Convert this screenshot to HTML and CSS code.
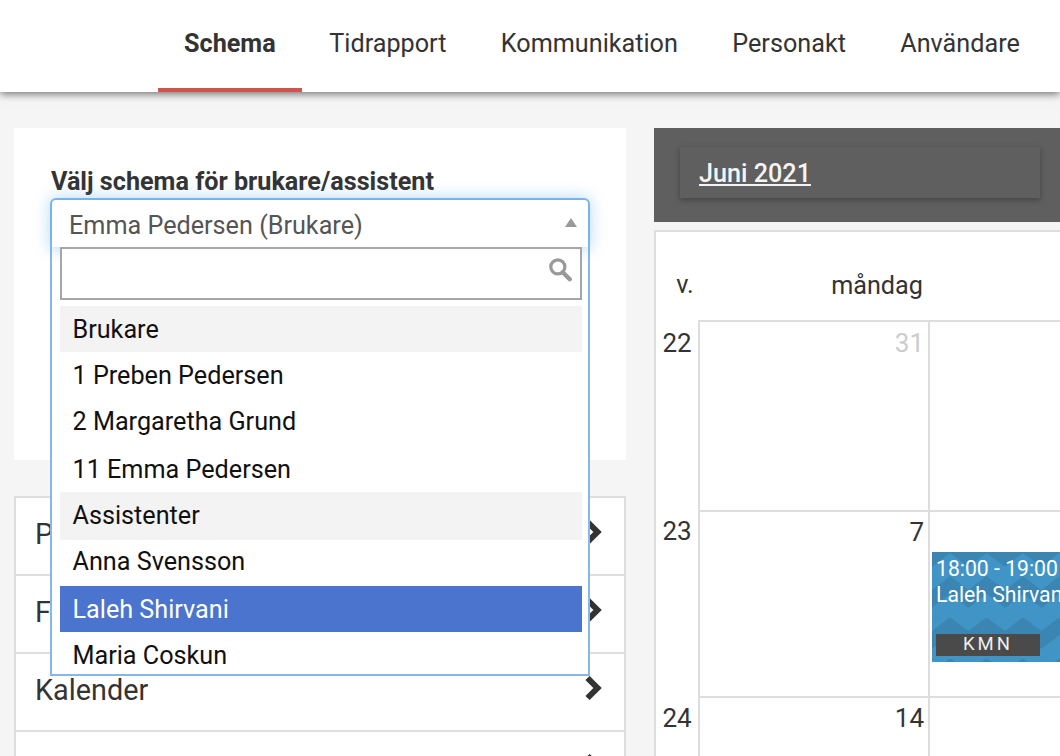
FILE: index.html
```html
<!DOCTYPE html>
<html lang="sv">

<head>
  <meta charset="UTF-8">
  <title>Schema</title>
  <link rel="stylesheet" href="styles.css">
</head>

<body>

  <header class="header">
    <nav class="tabs">
      <a class="tabs__item tabs__item--active" href="#">Schema</a>
      <a class="tabs__item" href="#">Tidrapport</a>
      <a class="tabs__item" href="#">Kommunikation</a>
      <a class="tabs__item" href="#">Personakt</a>
      <a class="tabs__item" href="#">Användare</a>
    </nav>
  </header>

  <main class="page">
    <aside class="side">
      <section class="picker">
        <label class="picker__label">Välj schema för brukare/assistent</label>
        <div class="select">
          <div class="select__current">
            Emma Pedersen (Brukare)
            <span class="select__arrow"></span>
          </div>
          <div class="select__search">
            <svg class="select__icon" viewBox="0 0 24 24" width="26" height="26">
              <circle cx="10" cy="10" r="6.5" fill="none" stroke="#999" stroke-width="3" />
              <path d="M14.5 15l6.5 6.5" stroke="#999" stroke-width="4" stroke-linecap="round" />
            </svg>
          </div>
          <ul class="select__list">
            <li class="select__group">Brukare</li>
            <li class="select__option">1 Preben Pedersen</li>
            <li class="select__option">2 Margaretha Grund</li>
            <li class="select__option select__option--tall">11 Emma Pedersen</li>
            <li class="select__group select__group--tall">Assistenter</li>
            <li class="select__option select__option--high">Anna Svensson</li>
            <li class="select__option select__option--active">Laleh Shirvani</li>
            <li class="select__option select__option--last">Maria Coskun</li>
          </ul>
        </div>
      </section>

      <ul class="menu">
        <li class="menu__row">P
          <svg class="menu__chevron" viewBox="0 0 20 26" width="20" height="26"><path d="M3.5 3l10 10-10 10" /></svg>
        </li>
        <li class="menu__row">F
          <svg class="menu__chevron" viewBox="0 0 20 26" width="20" height="26"><path d="M3.5 3l10 10-10 10" /></svg>
        </li>
        <li class="menu__row">Kalender
          <svg class="menu__chevron" viewBox="0 0 20 26" width="20" height="26"><path d="M3.5 3l10 10-10 10" /></svg>
        </li>
        <li class="menu__row">&nbsp;
          <svg class="menu__chevron" viewBox="0 0 20 26" width="20" height="26"><path d="M3.5 3l10 10-10 10" /></svg>
        </li>
      </ul>
    </aside>

    <section class="cal">
      <div class="cal__bar">
        <div class="cal__month"><a href="#">Juni 2021</a></div>
      </div>
      <div class="cal__body">
        <div class="cal__head">
          <div class="cal__week-title">v.</div>
          <div class="cal__day-title">måndag</div>
        </div>
        <div class="cal__row cal__row--first">
          <div class="cal__week">22</div>
          <div class="cal__cell"><span class="cal__date cal__date--muted">31</span></div>
          <div class="cal__cell"></div>
        </div>
        <div class="cal__row cal__row--second">
          <div class="cal__week">23</div>
          <div class="cal__cell"><span class="cal__date">7</span></div>
          <div class="cal__cell">
            <div class="event">
              <svg class="event__bg" width="100%" height="100%">
                <defs>
                  <pattern id="zigzag" width="36.5" height="41" patternUnits="userSpaceOnUse" patternTransform="translate(0 24)">
                    <path d="M0 14L18 0 36.5 14V32L18 18 0 32Z" fill="#3a85b2" />
                  </pattern>
                </defs>
                <rect width="100%" height="100%" fill="url(#zigzag)" />
              </svg>
              <div class="event__time">18:00 - 19:00</div>
              <div class="event__name">Laleh Shirvani</div>
              <div class="event__tag">KMN</div>
            </div>
          </div>
        </div>
        <div class="cal__row cal__row--third">
          <div class="cal__week">24</div>
          <div class="cal__cell"><span class="cal__date">14</span></div>
          <div class="cal__cell"></div>
        </div>
      </div>
    </section>
  </main>

</body>

</html>
```

FILE: styles.css
```css
* {
  box-sizing: border-box;
  margin: 0;
  padding: 0;
}

html,
body {
  height: 100%;
  overflow: hidden;
}

body {
  background: #f5f5f5;
  color: #333;
  font-family: Roboto, "Liberation Sans", sans-serif;
  font-size: 25.2px;
}

ul {
  list-style: none;
}

a {
  color: inherit;
  text-decoration: none;
}

.header {
  background: #fff;
  box-shadow: 0 2px 8px rgba(0, 0, 0, .55);
  height: 92px;
  position: relative;
  z-index: 2;
}

.tabs {
  display: flex;
  height: 100%;
  padding-left: 158px;
}

.tabs__item {
  border-bottom: 4px solid transparent;
  line-height: 87px;
  padding: 0 27.2px;
  white-space: nowrap;
}

.tabs__item--active {
  border-bottom-color: #d2544f;
  font-weight: 700;
  padding: 0 26.5px 0 26px;
}

.page {
  display: flex;
  gap: 28px;
  height: 664px;
  overflow: hidden;
  padding: 36px 0 0 14px;
}

.side {
  flex: none;
  width: 612px;
}

.picker {
  background: #fff;
  height: 332px;
  padding: 38px 37px 0;
  position: relative;
}

.picker__label {
  display: block;
  font-weight: 700;
  line-height: 32px;
}

.select {
  background: #fff;
  border: 2px solid #86b7e8;
  border-radius: 6px 6px 0 0;
  height: 478px;
  left: 36px;
  position: absolute;
  top: 70px;
  width: 540px;
  z-index: 3;
}

.select__current {
  border-radius: 4px 4px 0 0;
  box-shadow: 0 0 16px 2px rgba(82, 168, 236, .45);
  color: #555;
  height: 47px;
  line-height: 52px;
  padding-left: 17px;
  position: relative;
}

.select__arrow {
  border-bottom: 9px solid #999;
  border-left: 6px solid transparent;
  border-right: 6px solid transparent;
  position: absolute;
  right: 11px;
  top: 18px;
}

.select__search {
  background: #fff;
  border: 2px solid #a6a6a6;
  height: 53px;
  margin: 0 6px 0 8px;
  position: relative;
}

.select__icon {
  position: absolute;
  right: 7px;
  top: 7px;
}

.select__list {
  background: #fff;
  color: #111;
  margin: 0 6px 0 8px;
  padding-top: 6px;
  position: relative;
}

.select__option,
.select__group {
  height: 46px;
  line-height: 48px;
  padding-left: 12.5px;
  white-space: nowrap;
}

.select__option--tall {
  height: 48px;
  line-height: 52px;
}

.select__option--high {
  line-height: 44px;
}

.select__option--last {
  height: 42px;
  line-height: 39px;
  padding-top: 4px;
}

.select__group {
  background: #f3f3f3;
}

.select__group--tall {
  height: 48px;
}

.select__option--active {
  background: #4a74ce;
  color: #fff;
}

.menu {
  background: #fff;
  border: 2px solid #ddd;
  border-bottom: 0;
  font-size: 28.8px;
  margin-top: 36px;
}

.menu__row {
  align-items: center;
  border-bottom: 2px solid #ddd;
  display: flex;
  height: 78px;
  justify-content: space-between;
  padding: 0 20px 4px 19px;
}

.menu__chevron {
  fill: none;
  margin-top: -4px;
  stroke: #333;
  stroke-width: 6;
}

.cal {
  flex: 1;
  min-width: 0;
}

.cal__bar {
  background: #5f5f5f;
  height: 94px;
  padding: 19px 0 0 26px;
}

.cal__month {
  background: #5f5f5f;
  box-shadow: 0 2px 6px rgba(0, 0, 0, .3);
  color: #f4f4f4;
  font-weight: 500;
  height: 51px;
  line-height: 53px;
  padding-left: 19px;
  width: 360px;
}

.cal__month a {
  text-decoration: underline;
}

.cal__body {
  background: #fff;
  border-left: 2px solid #ddd;
  border-top: 2px solid #ddd;
  height: 526px;
  margin-top: 8px;
  overflow: hidden;
}

.cal__head {
  display: flex;
  height: 88px;
}

.cal__week-title {
  line-height: 106px;
  padding-left: 16px;
  text-align: center;
  width: 42px;
}

.cal__day-title {
  flex: none;
  line-height: 108px;
  text-align: center;
  width: 358px;
}

.cal__row {
  display: flex;
}

.cal__row--first {
  height: 190px;
}

.cal__row--second {
  height: 186px;
}

.cal__row--third {
  height: 100px;
}

.cal__week {
  flex: none;
  font-size: 26px;
  line-height: 43px;
  text-align: center;
  width: 42px;
}

.cal__row--first .cal__week {
  line-height: 47px;
}

.cal__row--third .cal__week {
  line-height: 44px;
}

.cal__cell {
  border-left: 2px solid #ddd;
  border-top: 2px solid #ddd;
  flex: none;
  font-size: 26px;
  line-height: 40px;
  padding-right: 4px;
  position: relative;
  text-align: right;
  width: 230px;
}

.cal__row--first .cal__cell {
  line-height: 42px;
}

.cal__date--muted {
  color: #ccc;
}

.event {
  background: #4195c6;
  color: #fff;
  font-size: 21.2px;
  height: 110px;
  left: 2px;
  line-height: 26px;
  overflow: hidden;
  padding: 4px 4px;
  position: absolute;
  text-align: left;
  top: 40px;
  white-space: nowrap;
  width: 140px;
}

.event__bg {
  left: 0;
  position: absolute;
  top: 0;
}

.event__time,
.event__name,
.event__tag {
  position: relative;
}

.event__tag {
  background: #4a4a4a;
  color: #eee;
  font-size: 18.5px;
  height: 22px;
  letter-spacing: 3px;
  line-height: 20px;
  margin-top: 26px;
  padding-left: 27px;
  width: 104px;
}
```
